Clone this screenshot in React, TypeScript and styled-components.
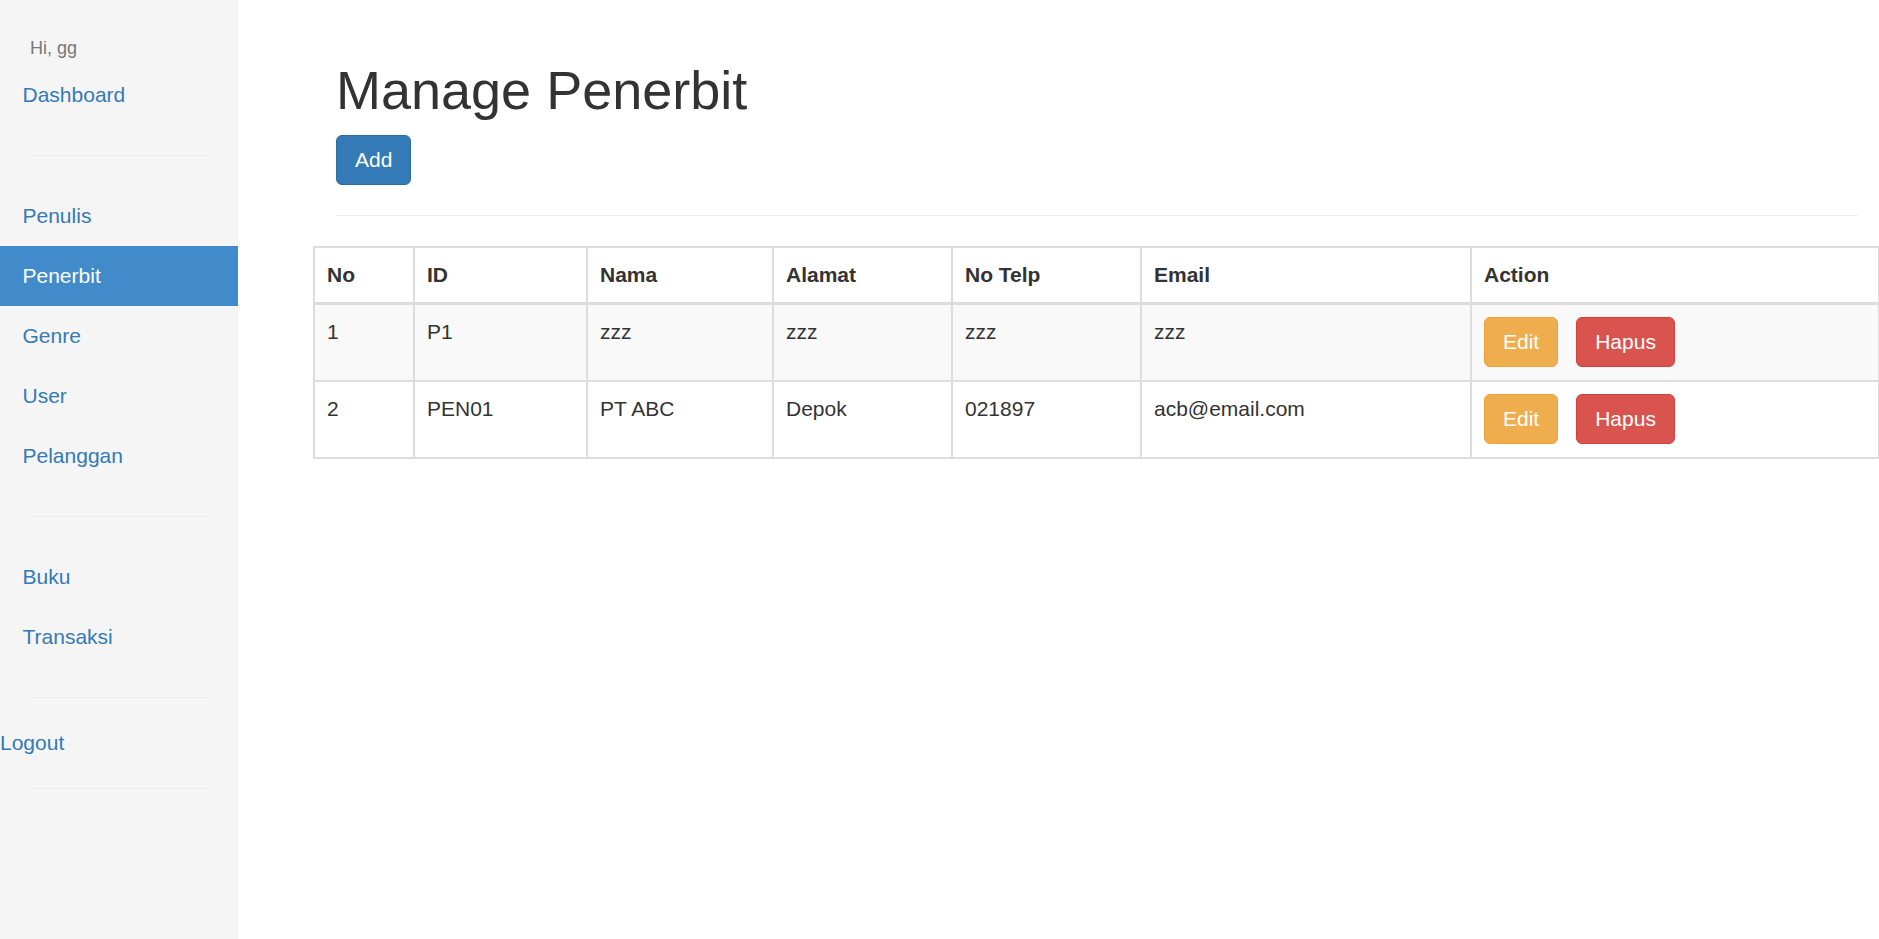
import React from "react";
import styled, { createGlobalStyle } from "styled-components";

const GlobalStyle = createGlobalStyle`
  html, body {
    margin: 0;
    padding: 0;
    background: #ffffff;
  }
  body {
    font-family: "Liberation Sans", Arial, Helvetica, sans-serif;
    font-size: 21px;
    line-height: 30px;
    color: #333333;
  }
  * { box-sizing: border-box; }
`;

const Layout = styled.div`
  display: flex;
  min-height: 100vh;
`;

const Sidebar = styled.aside`
  width: 238px;
  flex: 0 0 238px;
  background: #f5f5f5;
  padding-top: 33px;
  display: flex;
  flex-direction: column;
`;

const Greeting = styled.div`
  padding-left: 30px;
  font-size: 18px;
  line-height: 30px;
  color: #777777;
  margin-bottom: 2px;
`;

const NavList = styled.ul`
  list-style: none;
  margin: 0;
  padding: 0;
`;

const NavItem = styled.li<{ $active?: boolean }>`
  display: block;
  background: ${(p) => (p.$active ? "#428bca" : "transparent")};
`;

const NavLink = styled.a<{ $active?: boolean }>`
  display: block;
  padding: 15px 22.5px;
  line-height: 30px;
  font-size: 21px;
  color: ${(p) => (p.$active ? "#ffffff" : "#337ab7")};
  text-decoration: none;
  cursor: pointer;
`;

const LogoutLink = styled.a`
  display: block;
  line-height: 30px;
  font-size: 21px;
  color: #337ab7;
  text-decoration: none;
`;

const Divider = styled.hr`
  margin: 30px 30px;
  border: 0;
  border-top: 1px solid #ebebeb;
  height: 0;
`;

const Main = styled.main`
  flex: 1;
  padding: 31px 23px 0 98px;
`;

const Title = styled.h1`
  margin: 30px 0 15px;
  font-size: 54px;
  line-height: 1.1;
  font-weight: 500;
  color: #333333;
`;

type Variant = "primary" | "warning" | "danger";

const variantColors: Record<Variant, { bg: string; border: string }> = {
  primary: { bg: "#337ab7", border: "#2e6da4" },
  warning: { bg: "#f0ad4e", border: "#eea236" },
  danger: { bg: "#d9534f", border: "#d43f3a" },
};

const Button = styled.button<{ $variant: Variant }>`
  display: inline-block;
  padding: 9px 18px;
  font-family: inherit;
  font-size: 21px;
  line-height: 30px;
  color: #ffffff;
  background: ${(p) => variantColors[p.$variant].bg};
  border: 1.5px solid ${(p) => variantColors[p.$variant].border};
  border-radius: 6px;
  cursor: pointer;
  white-space: nowrap;
`;

const Rule = styled.hr`
  margin: 30px 0;
  border: 0;
  border-top: 1px solid #eeeeee;
  height: 0;
`;

const TableWrap = styled.div`
  margin: 0 -22px 0 -23px;
`;

const Table = styled.table`
  width: 100%;
  table-layout: fixed;
  border-collapse: collapse;
  border: 2px solid #dddddd;
`;

const HeadCell = styled.th`
  padding: 12px;
  text-align: left;
  vertical-align: bottom;
  font-weight: bold;
  line-height: 30px;
  border: 2px solid #dddddd;
  border-bottom-width: 3px;
`;

const Row = styled.tr<{ $striped?: boolean }>`
  background: ${(p) => (p.$striped ? "#f9f9f9" : "#ffffff")};
`;

const Cell = styled.td`
  padding: 12px 12px 13px;
  vertical-align: top;
  line-height: 30px;
  border: 2px solid #dddddd;
`;

const Actions = styled.div`
  display: flex;
  gap: 18px;
`;

const columns = [
  { label: "No", width: 100 },
  { label: "ID", width: 173 },
  { label: "Nama", width: 186 },
  { label: "Alamat", width: 179 },
  { label: "No Telp", width: 189 },
  { label: "Email", width: 330 },
  { label: "Action", width: 408 },
];

const rows = [
  { no: "1", id: "P1", nama: "zzz", alamat: "zzz", telp: "zzz", email: "zzz" },
  { no: "2", id: "PEN01", nama: "PT ABC", alamat: "Depok", telp: "021897", email: "acb@email.com" },
];

const menuGroups = [
  ["Dashboard"],
  ["Penulis", "Penerbit", "Genre", "User", "Pelanggan"],
  ["Buku", "Transaksi"],
];

export default function App() {
  return (
    <>
      <GlobalStyle />
      <Layout>
        <Sidebar>
          <Greeting>Hi, gg</Greeting>
          {menuGroups.map((group, gi) => (
            <React.Fragment key={gi}>
              <NavList>
                {group.map((item) => (
                  <NavItem key={item} $active={item === "Penerbit"}>
                    <NavLink $active={item === "Penerbit"}>{item}</NavLink>
                  </NavItem>
                ))}
              </NavList>
              <Divider />
            </React.Fragment>
          ))}
          <LogoutLink>Logout</LogoutLink>
          <Divider />
        </Sidebar>
        <Main>
          <Title>Manage Penerbit</Title>
          <Button $variant="primary">Add</Button>
          <Rule />
          <TableWrap>
            <Table>
              <colgroup>
                {columns.map((c) => (
                  <col key={c.label} style={{ width: c.width }} />
                ))}
              </colgroup>
              <thead>
                <tr>
                  {columns.map((c) => (
                    <HeadCell key={c.label}>{c.label}</HeadCell>
                  ))}
                </tr>
              </thead>
              <tbody>
                {rows.map((r, i) => (
                  <Row key={r.no} $striped={i % 2 === 0}>
                    <Cell>{r.no}</Cell>
                    <Cell>{r.id}</Cell>
                    <Cell>{r.nama}</Cell>
                    <Cell>{r.alamat}</Cell>
                    <Cell>{r.telp}</Cell>
                    <Cell>{r.email}</Cell>
                    <Cell>
                      <Actions>
                        <Button $variant="warning">Edit</Button>
                        <Button $variant="danger">Hapus</Button>
                      </Actions>
                    </Cell>
                  </Row>
                ))}
              </tbody>
            </Table>
          </TableWrap>
        </Main>
      </Layout>
    </>
  );
}
